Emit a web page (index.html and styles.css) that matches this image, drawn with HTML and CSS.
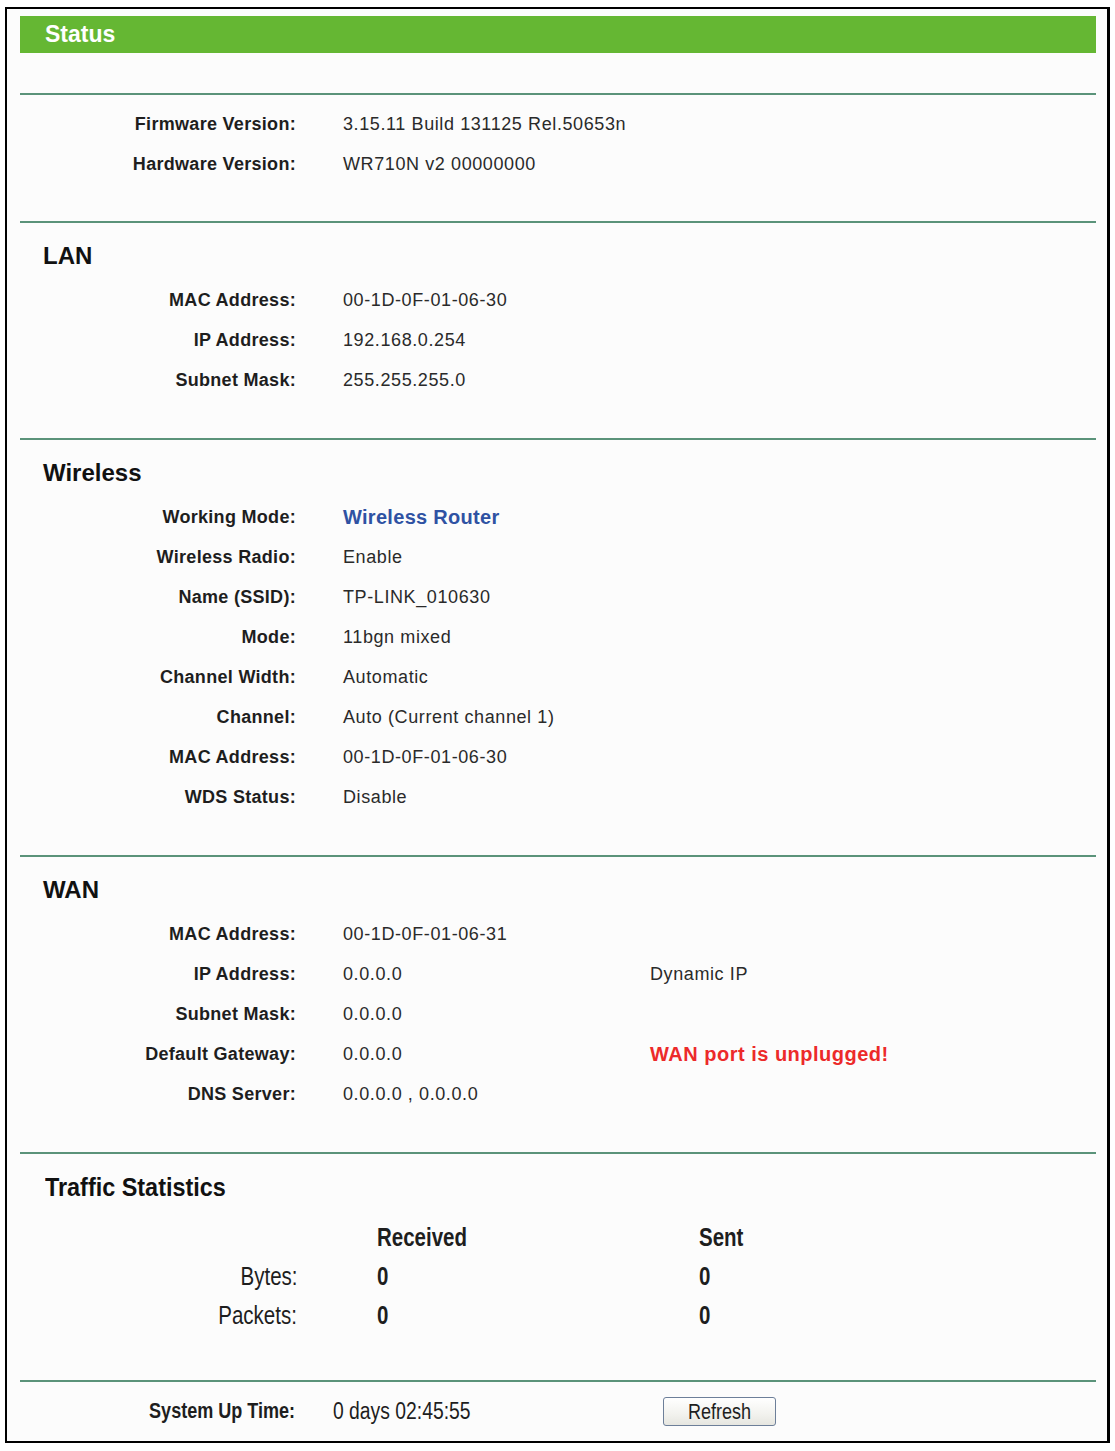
FILE: index.html
```html
<!DOCTYPE html>
<html>
<head>
<meta charset="utf-8">
<title>Status</title>
<link rel="stylesheet" href="styles.css">
</head>
<body>
<div class="frame">
  <div class="titlebar">Status</div>

  <div class="section top">
    <div class="grid">
      <div class="lab">Firmware Version:</div><div class="val">3.15.11 Build 131125 Rel.50653n</div><div></div>
      <div class="lab">Hardware Version:</div><div class="val">WR710N v2 00000000</div><div></div>
    </div>
  </div>

  <div class="section">
    <h2 class="heading">LAN</h2>
    <div class="grid">
      <div class="lab">MAC Address:</div><div class="val">00-1D-0F-01-06-30</div><div></div>
      <div class="lab">IP Address:</div><div class="val">192.168.0.254</div><div></div>
      <div class="lab">Subnet Mask:</div><div class="val">255.255.255.0</div><div></div>
    </div>
  </div>

  <div class="section">
    <h2 class="heading">Wireless</h2>
    <div class="grid">
      <div class="lab">Working Mode:</div><div class="val mode">Wireless Router</div><div></div>
      <div class="lab">Wireless Radio:</div><div class="val">Enable</div><div></div>
      <div class="lab">Name (SSID):</div><div class="val">TP-LINK_010630</div><div></div>
      <div class="lab">Mode:</div><div class="val">11bgn mixed</div><div></div>
      <div class="lab">Channel Width:</div><div class="val">Automatic</div><div></div>
      <div class="lab">Channel:</div><div class="val">Auto (Current channel 1)</div><div></div>
      <div class="lab">MAC Address:</div><div class="val">00-1D-0F-01-06-30</div><div></div>
      <div class="lab">WDS Status:</div><div class="val">Disable</div><div></div>
    </div>
  </div>

  <div class="section">
    <h2 class="heading">WAN</h2>
    <div class="grid">
      <div class="lab">MAC Address:</div><div class="val">00-1D-0F-01-06-31</div><div></div>
      <div class="lab">IP Address:</div><div class="val">0.0.0.0</div><div class="val">Dynamic IP</div>
      <div class="lab">Subnet Mask:</div><div class="val">0.0.0.0</div><div></div>
      <div class="lab">Default Gateway:</div><div class="val">0.0.0.0</div><div class="val warn">WAN port is unplugged!</div>
      <div class="lab">DNS Server:</div><div class="val">0.0.0.0 , 0.0.0.0</div><div></div>
    </div>
  </div>

  <div class="section traffic">
    <h2 class="heading"><span class="sq theading">Traffic Statistics</span></h2>
    <div class="tgrid">
      <div></div><div class="thead"><span class="sq">Received</span></div><div class="thead"><span class="sq">Sent</span></div>
      <div class="tlab"><span class="sq">Bytes:</span></div><div class="tnum"><span class="sq">0</span></div><div class="tnum"><span class="sq">0</span></div>
      <div class="tlab"><span class="sq">Packets:</span></div><div class="tnum"><span class="sq">0</span></div><div class="tnum"><span class="sq">0</span></div>
    </div>
  </div>

  <div class="section uptime">
    <div class="ugrid">
      <div class="ulab"><span class="sq">System Up Time:</span></div>
      <div class="uval"><span class="sq">0 days 02:45:55</span></div>
      <div class="ubtn"><button class="refresh" type="button"><span class="sq">Refresh</span></button></div>
    </div>
  </div>
</div>
</body>
</html>
```

FILE: styles.css
```css
html, body {
  margin: 0;
  padding: 0;
  background: #ffffff;
}

body {
  font-family: "Liberation Sans", Arial, sans-serif;
  color: #1e1e1e;
}

.frame {
  box-sizing: border-box;
  width: 1105px;
  height: 1436px;
  margin: 7px 0 0 5px;
  border: 2px solid #000;
  border-right-width: 3px;
  background: #fcfcfc;
  padding: 7px 11px 0 13px;
}

.titlebar {
  height: 37px;
  line-height: 37px;
  background: #65b733;
  color: #ffffff;
  font-weight: bold;
  font-size: 23px;
  padding-left: 25px;
}

.section {
  border-top: 2px solid #5b937a;
  padding-bottom: 38px;
}

.section.top {
  margin-top: 40px;
  padding-top: 9px;
  padding-bottom: 37px;
}

.heading {
  margin: 13px 0 4px 0;
  padding-left: 23px;
  height: 40px;
  line-height: 40px;
  font-size: 24px;
  font-weight: bold;
  color: #111;
}

.grid {
  display: grid;
  grid-template-columns: 276px 260px auto;
  column-gap: 47px;
  grid-auto-rows: 40px;
  line-height: 40px;
  font-size: 18px;
}

.lab {
  text-align: right;
  font-weight: bold;
  color: #1e1e1e;
  letter-spacing: 0.3px;
}

.val {
  color: #2a2a2a;
  white-space: nowrap;
  letter-spacing: 0.6px;
}

.val.mode {
  color: #2f52a3;
  font-weight: bold;
  font-size: 20px;
  letter-spacing: 0.3px;
}

.val.warn {
  color: #ec2a2a;
  font-weight: bold;
  font-size: 20px;
  letter-spacing: 0.5px;
}

/* condensed text used in the traffic and uptime blocks */
.sq {
  display: inline-block;
  transform: scaleX(0.82);
  transform-origin: left center;
  white-space: nowrap;
}

.traffic .heading {
  padding-left: 25px;
  font-size: 26px;
}

.theading {
  transform: scaleX(0.9);
}

.traffic {
  padding-bottom: 45px;
}

.tgrid {
  display: grid;
  grid-template-columns: 277px 242px auto;
  column-gap: 80px;
  grid-template-rows: 39px 39px 39px;
  line-height: 39px;
  margin-top: 11px;
  font-size: 25px;
  color: #1e1e1e;
}

.thead {
  font-weight: bold;
}

.tlab {
  text-align: right;
}

.tlab .sq,
.ulab .sq {
  transform-origin: right center;
}

.tnum {
  font-weight: bold;
}

.uptime {
  padding-top: 9px;
  padding-bottom: 0;
}

.ugrid {
  display: grid;
  grid-template-columns: 275px 292px auto;
  column-gap: 38px;
  height: 40px;
  line-height: 40px;
  font-size: 22px;
}

.ulab {
  text-align: right;
  font-weight: bold;
}

.uval {
  font-size: 23px;
}

.uval .sq {
  transform: scaleX(0.84);
}

.ubtn {
  display: flex;
  align-items: center;
}

.refresh {
  box-sizing: border-box;
  width: 113px;
  height: 29px;
  padding: 0;
  border: 1px solid #6d7f99;
  border-radius: 3px;
  background: linear-gradient(#ffffff, #f2f2ee 60%, #e6e6e0);
  font-family: "Liberation Sans", Arial, sans-serif;
  font-size: 22px;
  line-height: 27px;
  color: #1e1e1e;
}

.refresh .sq {
  transform-origin: center center;
}
```
